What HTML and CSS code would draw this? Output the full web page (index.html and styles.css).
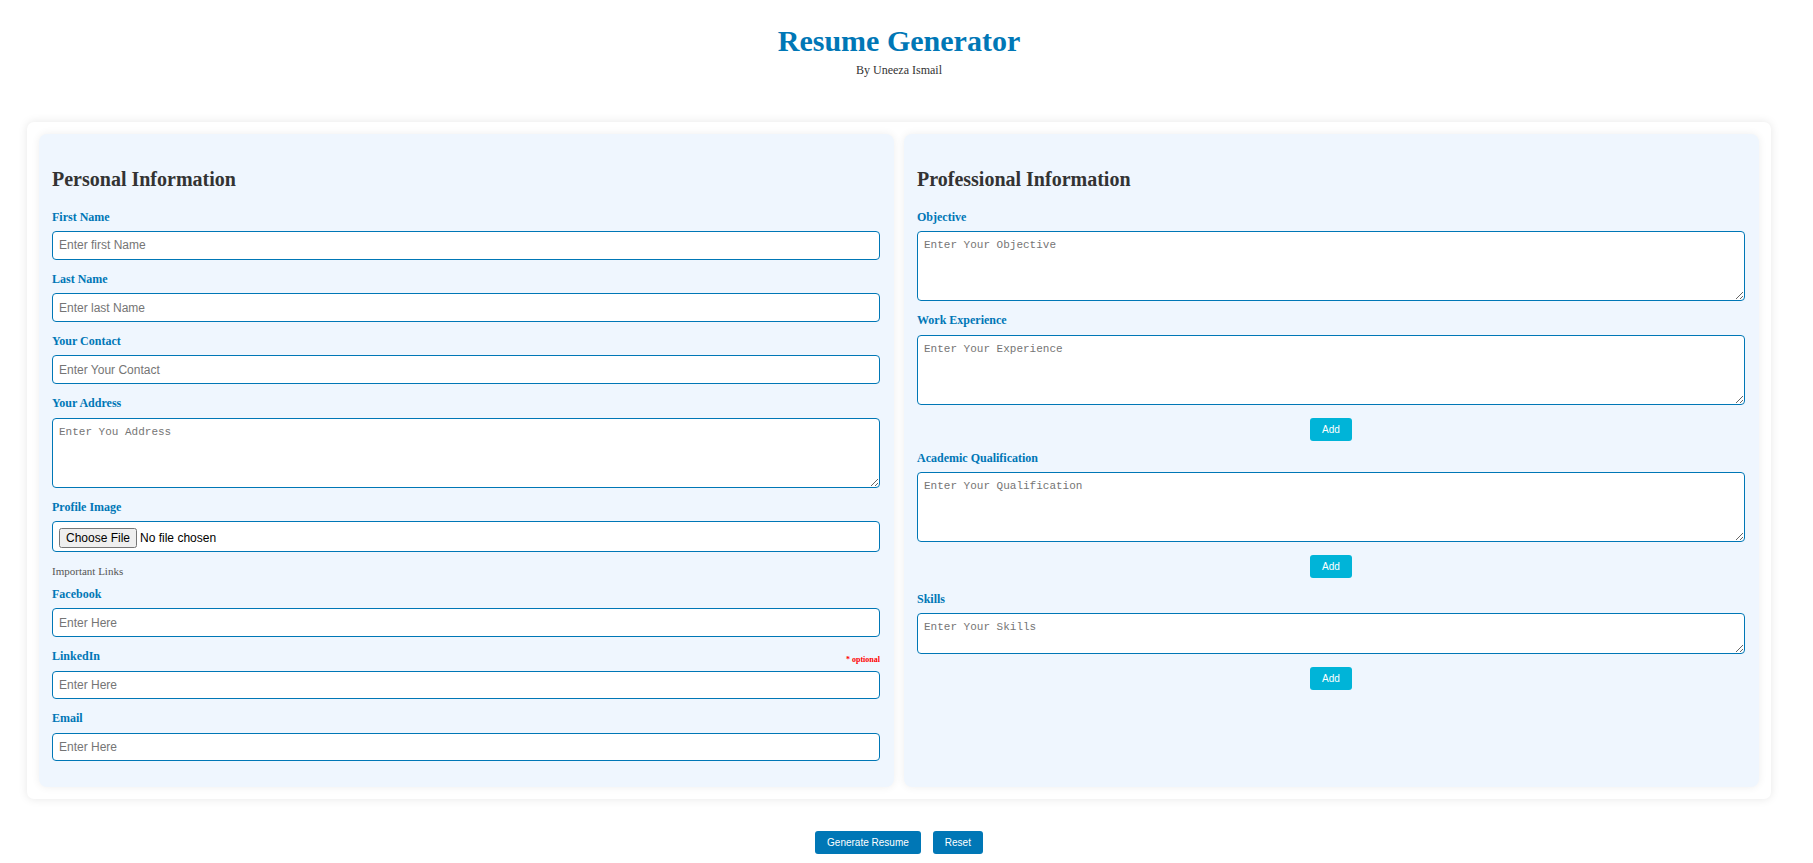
FILE: index.html
```html
<!DOCTYPE html>
<html lang="en">
<head>
<meta charset="utf-8">
<title>Resume Generator</title>
<link rel="stylesheet" href="styles.css">
</head>
<body>
<div class="page">
  <header class="header">
    <h1 class="title">Resume Generator</h1>
    <p class="author">By Uneeza Ismail</p>
  </header>

  <main class="card">
    <section class="panel">
      <h2 class="panel-title">Personal Information</h2>

      <div class="field">
        <label class="label" for="fname">First Name</label>
        <input class="control" id="fname" type="text" placeholder="Enter first Name">
      </div>
      <div class="field">
        <label class="label" for="lname">Last Name</label>
        <input class="control" id="lname" type="text" placeholder="Enter last Name">
      </div>
      <div class="field">
        <label class="label" for="contact">Your Contact</label>
        <input class="control" id="contact" type="text" placeholder="Enter Your Contact">
      </div>
      <div class="field">
        <label class="label" for="address">Your Address</label>
        <textarea class="control area" id="address" placeholder="Enter You Address"></textarea>
      </div>
      <div class="field">
        <label class="label" for="image">Profile Image</label>
        <input class="control file" id="image" type="file">
      </div>

      <p class="links-note">Important Links</p>

      <div class="field">
        <label class="label" for="fb">Facebook</label>
        <input class="control" id="fb" type="text" placeholder="Enter Here">
      </div>
      <div class="field">
        <div class="label-row">
          <label class="label" for="li">LinkedIn</label>
          <span class="optional">* optional</span>
        </div>
        <input class="control" id="li" type="text" placeholder="Enter Here">
      </div>
      <div class="field">
        <label class="label" for="email">Email</label>
        <input class="control" id="email" type="text" placeholder="Enter Here">
      </div>
    </section>

    <section class="panel">
      <h2 class="panel-title">Professional Information</h2>

      <div class="field">
        <label class="label" for="objective">Objective</label>
        <textarea class="control area" id="objective" placeholder="Enter Your Objective"></textarea>
      </div>
      <div class="field">
        <label class="label" for="experience">Work Experience</label>
        <textarea class="control area" id="experience" placeholder="Enter Your Experience"></textarea>
      </div>
      <div class="add-row"><button class="btn-add" type="button">Add</button></div>

      <div class="field">
        <label class="label" for="qualification">Academic Qualification</label>
        <textarea class="control area" id="qualification" placeholder="Enter Your Qualification"></textarea>
      </div>
      <div class="add-row add-row-wide"><button class="btn-add" type="button">Add</button></div>

      <div class="field">
        <label class="label" for="skills">Skills</label>
        <textarea class="control area area-short" id="skills" placeholder="Enter Your Skills"></textarea>
      </div>
      <div class="add-row"><button class="btn-add" type="button">Add</button></div>
    </section>
  </main>

  <div class="actions">
    <button class="btn-main" type="button">Generate Resume</button>
    <button class="btn-main" type="button">Reset</button>
  </div>
</div>
</body>
</html>
```

FILE: styles.css
```css
* {
  box-sizing: border-box;
}

html, body {
  margin: 0;
  padding: 0;
  background: #ffffff;
}

body {
  font-family: "Liberation Serif", "Times New Roman", serif;
  color: #333333;
}

.page {
  margin-right: 15px;
  padding-bottom: 20px;
}

.header {
  text-align: center;
  padding-top: 24px;
}

.title {
  margin: 0;
  font-size: 30px;
  font-weight: bold;
  line-height: 34.5px;
  color: #0077b6;
}

.author {
  margin: 4px 0 0;
  font-size: 12px;
  line-height: 14px;
  color: #333333;
}

.card {
  margin: 45px 27px 0;
  padding: 12px;
  background: #ffffff;
  border-radius: 7px;
  box-shadow: 0 0 10px rgba(0, 0, 0, 0.1);
  display: grid;
  grid-template-columns: 1fr 1fr;
  gap: 10px;
}

.panel {
  background: #eff6fe;
  border-radius: 8px;
  box-shadow: 0 0 8px rgba(0, 0, 0, 0.07);
  padding: 14px 14px 13px 13px;
}

.panel-title {
  margin: 20px 0 20px;
  font-size: 20px;
  line-height: 23px;
  font-weight: bold;
  color: #333333;
}

.field {
  margin-bottom: 13px;
}

.label {
  display: block;
  margin-bottom: 7px;
  font-size: 12px;
  line-height: 13.6px;
  font-weight: bold;
  color: #0077b6;
}

.label-row {
  display: flex;
  justify-content: space-between;
  align-items: baseline;
  margin-bottom: 7px;
}

.label-row .label {
  margin-bottom: 0;
}

.optional {
  font-size: 8px;
  font-weight: bold;
  color: #ff0000;
  position: relative;
  top: 2px;
}

.control {
  display: block;
  width: 100%;
  height: 28.6px;
  margin: 0;
  padding: 6px 6px;
  border: 1px solid #0077b6;
  border-radius: 4px;
  background: #ffffff;
  font-family: "Liberation Sans", Arial, sans-serif;
  font-size: 12px;
  color: #222222;
  outline: none;
}

.control::placeholder {
  color: #757575;
}

.area {
  height: 70px;
  font-family: "Liberation Mono", "Courier New", monospace;
  font-size: 11px;
  line-height: 14px;
  padding: 6px 6px;
  resize: vertical;
}

.area-short {
  height: 41px;
}

.file {
  height: 31px;
  padding: 6px;
  font-size: 12px;
  color: #000000;
}

.file::file-selector-button {
  font-family: "Liberation Sans", Arial, sans-serif;
  font-size: 12px;
  padding: 1px 5px;
  margin-right: 3px;
}

.links-note {
  margin: 0 0 10px;
  font-size: 11px;
  line-height: 12.6px;
  color: #555555;
}

.add-row {
  text-align: center;
  margin-bottom: 11px;
}

.add-row-wide {
  margin-bottom: 14.5px;
}

.btn-add {
  display: inline-block;
  padding: 6px 12px;
  border: none;
  border-radius: 3px;
  background: #00b4d8;
  color: #ffffff;
  font-family: "Liberation Sans", Arial, sans-serif;
  font-size: 10px;
  line-height: 11px;
  cursor: pointer;
}

.actions {
  display: flex;
  justify-content: center;
  gap: 12px;
  margin-top: 32px;
}

.btn-main {
  padding: 6px 12px;
  border: none;
  border-radius: 3px;
  background: #0077b6;
  color: #ffffff;
  font-family: "Liberation Sans", Arial, sans-serif;
  font-size: 10px;
  line-height: 11px;
  cursor: pointer;
}
```
